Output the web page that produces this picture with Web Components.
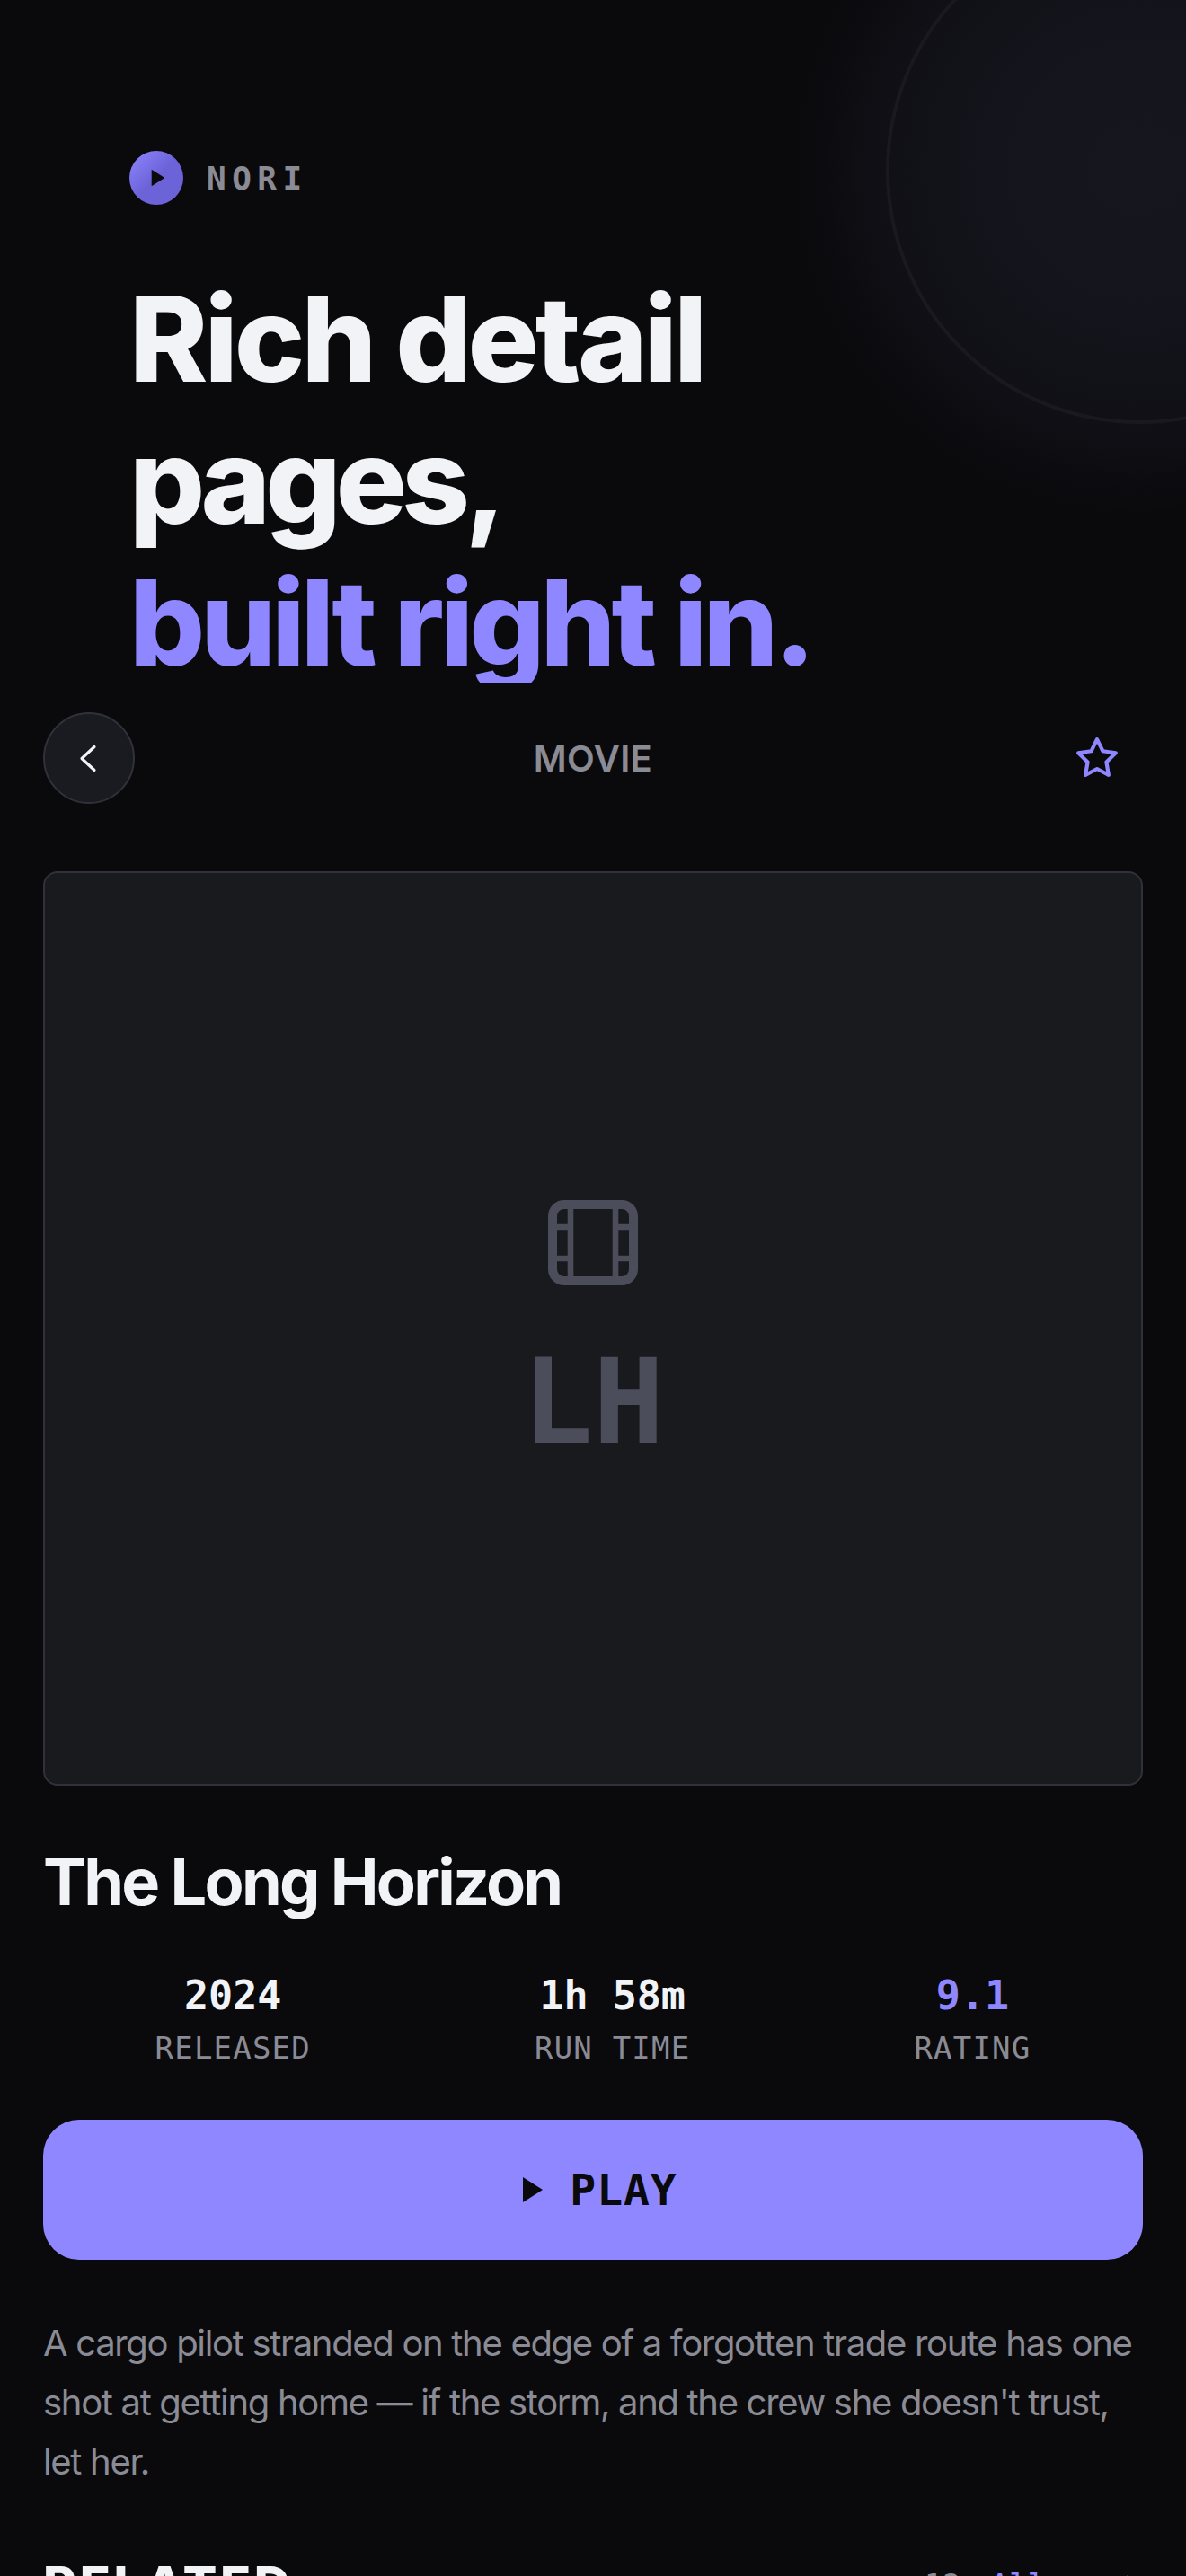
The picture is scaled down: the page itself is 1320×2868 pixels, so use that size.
<!doctype html>
<html>
<head>
<meta charset="utf-8">
<style>
  html, body { margin: 0; background: #0a0a0d; }
  body { width: 1320px; height: 2868px; overflow: hidden; font-family: Inter, sans-serif; }
</style>
</head>
<body>
<nori-hero>
  <span slot="l1">Rich detail</span>
  <span slot="l2">pages,</span>
  <span slot="l3">built right in.</span>
</nori-hero>
<nori-detail></nori-detail>

<script>
'use strict'
const MONO = '"DejaVu Sans Mono", monospace'
const PLAY_PATH = 'M8 5v14l11-7z'

class NoriHero extends HTMLElement {
  constructor () {
    super()
    this.attachShadow({ mode: 'open' }).innerHTML = `
    <style>
      /* the last line's descender is clipped by this box in the original too */
      :host { display: block; position: relative; overflow: hidden; height: 760px; margin-bottom: 33px; padding: 168px 144px 0; box-sizing: border-box; }
      .glow { position: absolute; left: 868px; top: -212px; width: 800px; height: 800px; border-radius: 50%;
        background: radial-gradient(circle 385px, rgba(130,130,195,.1) 0%, rgba(130,130,195,.09) 35%, rgba(130,130,195,.05) 72%, rgba(130,130,195,0) 100%); }
      .ring { position: absolute; left: 986px; top: -92px; width: 564px; height: 564px; box-sizing: border-box; border-radius: 50%; border: 4px solid rgba(255,255,255,.04); }
      .brand { position: relative; display: flex; align-items: center; gap: 26px; height: 60px; }
      .logo { width: 60px; height: 60px; border-radius: 50%; background: linear-gradient(135deg, #8f87ff, #6c63d9 50%); display: flex; align-items: center; justify-content: center; }
      .name { font: 700 36px ${MONO}; letter-spacing: .18em; color: #8a8b94; }
      h1 { position: relative; margin: 70px 0 0; font: 800 132px/158px Inter, sans-serif; letter-spacing: -.03em; color: #f2f3f7; width: 1000px; }
      h1 span { display: block; }
      .l2 { letter-spacing: -5.9px; }
      .l3 { letter-spacing: -4.9px; color: #8f87ff; }
    </style>
    <div class="glow"></div>
    <div class="ring"></div>
    <div class="brand">
      <div class="logo"><svg width="32" height="32" viewBox="0 0 24 24"><path d="${PLAY_PATH}" fill="#0a0a0d"/></svg></div>
      <span class="name">NORI</span>
    </div>
    <h1><span><slot name="l1"></slot></span><span class="l2"><slot name="l2"></slot></span><span class="l3"><slot name="l3"></slot></span></h1>
    `
  }
}

class NoriStat extends HTMLElement {
  constructor () {
    super()
    this.attachShadow({ mode: 'open' }).innerHTML = `
    <style>
      :host { display: flex; flex-direction: column; align-items: center; gap: 8px; font-family: ${MONO}; }
      .v { font-weight: 700; font-size: 45px; line-height: 56px; color: var(--value, #f2f3f7); }
      .l { font-size: 34px; line-height: 44px; color: #8a8b94; letter-spacing: .035em; }
    </style>
    <span class="v"><slot></slot></span>
    <span class="l"><slot name="label"></slot></span>
    `
  }
}

class NoriDetail extends HTMLElement {
  constructor () {
    super()
    this.attachShadow({ mode: 'open' }).innerHTML = `
    <style>
      :host { display: block; padding: 0 48px; }
      .top { display: flex; align-items: center; justify-content: space-between; height: 102px; }
      .back { width: 102px; height: 102px; box-sizing: border-box; border-radius: 50%; background: #1a1b20; border: 2px solid #30313a; display: flex; align-items: center; justify-content: center; }
      .kind { font: 600 40px Inter, sans-serif; letter-spacing: .01em; color: #8a8b94; }
      .star { width: 102px; display: flex; justify-content: center; }
      .poster { margin-top: 75px; height: 1018px; box-sizing: border-box; border: 2px solid #30313a; border-radius: 16px; background: #191a1e; display: flex; flex-direction: column; align-items: center; justify-content: center; color: #4c4d5a; }
      .film { margin-top: 4px; }
      .initials { font: 700 132px/1 ${MONO}; margin-top: 64px; }
      h2 { margin: 64px 0 0; font: 700 72px/1.2 Inter, sans-serif; letter-spacing: -2.8px; color: #f2f3f7; }
      .stats { display: flex; justify-content: space-around; margin-top: 56px; }
      .play { margin-top: 58px; height: 156px; border-radius: 40px; background: #8f87ff; display: flex; align-items: center; justify-content: center; gap: 20px; font: 700 48px ${MONO}; letter-spacing: .02em; color: #0a0a0d; }
      p { margin: 60px 0 0; font: 400 40px/66px Inter, sans-serif; letter-spacing: -1.32px; color: #8a8b94; }
      .rel { display: flex; justify-content: space-between; align-items: center; margin-top: 70px; }
      .rel b { font: 800 56px Inter, sans-serif; color: #f2f3f7; letter-spacing: .065em; }
      .meta { display: flex; align-items: center; font: 400 34px ${MONO}; color: #8a8b94; }
      .meta i { font-style: normal; color: #8f87ff; margin-left: 33px; }
      .meta svg { margin-left: 88px; }
    </style>
    <div class="top">
      <div class="back"><svg width="40" height="40" viewBox="0 0 40 40" fill="none" stroke="#f2f3f7" stroke-width="3.2" stroke-linecap="round" stroke-linejoin="round"><path d="M26 7.5L12 20.5L26 33.5"/></svg></div>
      <span class="kind">MOVIE</span>
      <div class="star"><svg width="50" height="50" viewBox="0 0 24 24" fill="none" stroke="#8f87ff" stroke-width="2" stroke-linecap="round" stroke-linejoin="round"><path d="M12 2l3.09 6.26L22 9.27l-5 4.87 1.18 6.88L12 17.77l-6.18 3.25L7 14.14 2 9.27l6.91-1.01z"/></svg></div>
    </div>
    <div class="poster">
      <svg class="film" width="100" height="95" viewBox="0 0 100 95" fill="none" stroke="currentColor"><rect x="5" y="5" width="90" height="85" rx="13" stroke-width="10"/><path stroke-width="6.6" d="M25 5v85M75 5v85M5 30h20M5 65h20M75 30h20M75 65h20"/></svg>
      <div class="initials">LH</div>
    </div>
    <h2>The Long Horizon</h2>
    <div class="stats">
      <nori-stat>2024<span slot="label">RELEASED</span></nori-stat>
      <nori-stat>1h 58m<span slot="label">RUN TIME</span></nori-stat>
      <nori-stat style="--value:#8f87ff">9.1<span slot="label">RATING</span></nori-stat>
    </div>
    <div class="play"><svg width="48" height="48" viewBox="0 0 24 24"><path d="${PLAY_PATH}" fill="#0a0a0d"/></svg>PLAY</div>
    <p>A cargo pilot stranded on the edge of a forgotten trade route has one shot at getting home — if the storm, and the crew she doesn't trust, let her.</p>
    <div class="rel">
      <b>RELATED</b>
      <span class="meta">12<i>All</i><svg width="20" height="22" viewBox="0 0 20 22" fill="none" stroke="#8a8b94" stroke-width="3" stroke-linecap="round" stroke-linejoin="round"><path d="M3 2l12 9-12 9"/></svg></span>
    </div>
    `
  }
}

customElements.define('nori-hero', NoriHero)
customElements.define('nori-stat', NoriStat)
customElements.define('nori-detail', NoriDetail)
</script>
</body>
</html>
